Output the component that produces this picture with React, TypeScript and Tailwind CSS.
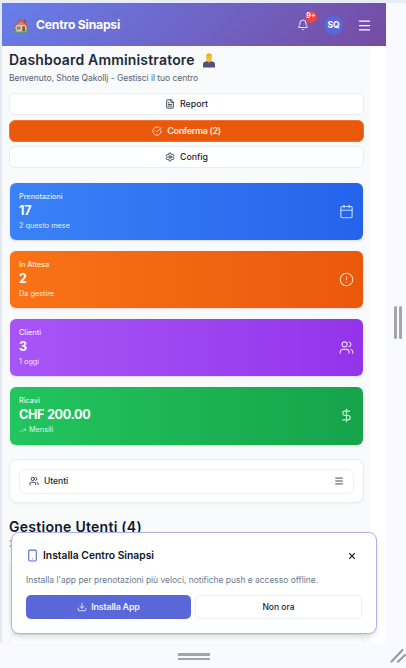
import type { ReactNode } from "react";
import {
  Bell,
  Calendar,
  CircleAlert,
  CircleCheckBig,
  DollarSign,
  Download,
  FileText,
  Menu,
  Settings,
  Smartphone,
  TrendingUp,
  Users,
  X,
} from "lucide-react";

function HouseEmoji() {
  return (
    <svg width="16" height="15" viewBox="0 0 16 15" className="shrink-0">
      <rect x="0.5" y="12.6" width="15" height="1.9" rx="0.9" fill="#63a54a" />
      <rect x="11" y="1.5" width="2" height="5" fill="#9a5142" />
      <path d="M2.5 7.5 8 2.5l5.5 5V13.4h-11z" fill="#e3c9a4" />
      <path d="M0.6 8.2 7.2 1.5q.8-.7 1.6 0l6.6 6.7-1 .9L8 3.4 1.6 9.1z" fill="#cf5540" />
      <path d="M8 3.2 12 7H4z" fill="#c98966" />
      <rect x="3.8" y="8.5" width="3.6" height="3" fill="#668ca6" />
      <rect x="9.3" y="8.3" width="2.7" height="5.1" fill="#925039" />
      <circle cx="2" cy="12.2" r="1.4" fill="#619a49" />
      <circle cx="14" cy="12.4" r="1.2" fill="#619a49" />
    </svg>
  );
}

function OfficeWorkerEmoji() {
  return (
    <svg width="14" height="15" viewBox="0 0 14 15" className="shrink-0">
      <path d="M1 14.6V11.4q0-2.5 3.2-3.1h5.6q3.2.6 3.2 3.1v3.2z" fill="#58506f" />
      <path d="M5.8 8.3h2.4L7 10.6z" fill="#b9b6cc" />
      <path d="m6.4 9.5h1.2l.5 4L7 14.6l-1.1-1.1z" fill="#63479d" />
      <rect x="5.6" y="6.8" width="2.8" height="1.9" fill="#e6a51b" />
      <ellipse cx="7" cy="4.6" rx="2.9" ry="3.8" fill="#f5bd2f" />
      <path d="M4 4Q3.8.6 7 .6T10 4L9.2 2.6Q6.4 2.9 4.8 2.5z" fill="#e5a828" />
    </svg>
  );
}

function ActionButton({ icon, label, primary = false }: { icon: ReactNode; label: string; primary?: boolean }) {
  return (
    <button
      className={
        primary
          ? "flex h-[22px] w-full items-center justify-center gap-[5px] rounded-md border border-[#ee7430] bg-[#ea580c] text-[9px] font-semibold tracking-[-0.36px] text-[#ffe9dc]"
          : "flex h-[22px] w-full items-center justify-center gap-[5px] rounded-md border border-[#e9edf3] bg-white text-[8.8px] font-medium text-[#1e2533]"
      }
    >
      {icon}
      {label}
    </button>
  );
}

function StatCard({
  label,
  value,
  note,
  icon,
  tone,
}: {
  label: string;
  value: string;
  note: ReactNode;
  icon: ReactNode;
  tone: string;
}) {
  return (
    <section className={`flex h-[57.5px] items-center justify-between rounded-md pr-[9.5px] pl-[9.5px] text-white shadow-sm ${tone}`}>
      <div>
        <p className="text-[7.3px] leading-[10px] font-medium opacity-85">{label}</p>
        <p className="text-[12.6px] leading-[17px] font-bold tracking-[-0.3px]">{value}</p>
        <p className="mt-[2px] flex items-center gap-[3px] text-[7.3px] leading-[10px] opacity-85">{note}</p>
      </div>
      {icon}
    </section>
  );
}

export default function App() {
  return (
    <div className="relative h-[668px] w-[406px] overflow-hidden bg-[#f8faff] pt-[3px] pl-[2px] font-['Inter',sans-serif]">
      <div className="absolute inset-x-0 top-0 h-[3px] bg-[#e9eef6]" />
      <div className="absolute top-0 left-0 h-[643px] w-[2px] bg-[#e3e9f2]" />

      <div className="h-[640px] w-[384px] overflow-hidden bg-white">
        <header className="flex h-[43px] items-center bg-[linear-gradient(135deg,#667eea_0%,#764ba2_100%)] pt-px pl-[11px] text-white">
          <HouseEmoji />
          <h1 className="ml-[7px] flex-1 text-[12.2px] font-bold tracking-[-0.22px] whitespace-nowrap">Centro Sinapsi</h1>
          <div className="relative mr-[15px]">
            <Bell size={12} strokeWidth={2} className="text-[#efe9fa]" />
            <span className="absolute -top-[8.5px] left-[8px] flex size-[12px] items-center justify-center rounded-full bg-[#ef4444] text-[7px] font-bold">
              9+
            </span>
          </div>
          <span className="mr-[14px] flex size-[19px] items-center justify-center rounded-full bg-[#5a67d8] text-[8.5px] font-bold">
            SQ
          </span>
          <Menu size={15} strokeWidth={2} className="mr-[14px]" />
        </header>

        <main className="h-[597px] w-[368px] bg-[#f8fafc] pr-[6px] pl-[7px]">
          <div className="flex h-[28px] items-center gap-[7px]">
            <h2 className="text-[14px] leading-[18px] font-semibold tracking-[0.17px] whitespace-nowrap text-[#1f2937]">
              Dashboard Amministratore
            </h2>
            <OfficeWorkerEmoji />
          </div>
          <p className="h-[19px] text-[8.5px] leading-[9px] tracking-[-0.04px] text-[#566172]">
            Benvenuto, Shote Qakollj - Gestisci il tuo centro
          </p>

          <div className="flex flex-col gap-[4.5px]">
            <ActionButton icon={<FileText size={10} />} label="Report" />
            <ActionButton icon={<CircleCheckBig size={10} />} label="Conferma (2)" primary />
            <ActionButton icon={<Settings size={10} />} label="Config" />
          </div>

          <div className="mt-[14.5px] mr-px ml-[0.5px] flex flex-col gap-[10.7px]">
            <StatCard
              label="Prenotazioni"
              value="17"
              note="2 questo mese"
              tone="bg-linear-to-r from-[#3b82f6] to-[#2563eb]"
              icon={<Calendar size={15} strokeWidth={1.8} className="text-[#bfdbfe]" />}
            />
            <StatCard
              label="In Attesa"
              value="2"
              note="Da gestire"
              tone="bg-linear-to-r from-[#f97316] to-[#ea580c]"
              icon={<CircleAlert size={15} strokeWidth={1.8} className="text-[#fed7aa]" />}
            />
            <StatCard
              label="Clienti"
              value="3"
              note="1 oggi"
              tone="bg-linear-to-r from-[#a855f7] to-[#9333ea]"
              icon={<Users size={15} strokeWidth={1.8} className="text-[#e9d5ff]" />}
            />
            <StatCard
              label="Ricavi"
              value="CHF 200.00"
              note={
                <>
                  <TrendingUp size={7} />
                  Mensili
                </>
              }
              tone="bg-linear-to-r from-[#22c55e] to-[#16a34a]"
              icon={<DollarSign size={15} strokeWidth={1.8} className="text-[#bbf7d0]" />}
            />
          </div>

          <div className="mt-[14.9px] h-[44px] rounded-lg border border-[#e8edf3] bg-white px-[9px] pt-[8.5px] shadow-xs">
            <button className="flex h-[25px] w-full items-center rounded-md border border-[#edf1f5] px-[9px] text-[8.5px] font-medium text-[#1e2533]">
              <Users size={10} />
              <span className="ml-[5px] flex-1 text-left">Utenti</span>
              <Menu size={10} />
            </button>
          </div>

          <h2 className="mt-[15px] text-[14px] leading-[18px] font-semibold tracking-[0.27px] text-[#0f172a]">Gestione Utenti (4)</h2>
          <p className="mt-[2px] text-[8.5px] leading-[12px] text-[#64748b]">3 clienti</p>
          <div className="mt-[8px] h-[70px] rounded-lg border border-[#e8edf3] bg-[#fbfcfe]" />
          <div className="mt-[6px] h-[40px] rounded-t-lg border border-[#edf1f6] bg-[#fbfcfe]" />
        </main>
      </div>

      <aside className="absolute top-[532px] left-[11px] h-[102px] w-[366px] rounded-lg border border-[#aeb3e2] bg-white px-[14px] pt-[14px] shadow-md">
        <div className="flex h-[18px] items-center">
          <Smartphone size={13} className="-mt-px text-[#5a67d8]" />
          <h3 className="ml-[4px] flex-1 text-[10.3px] font-semibold text-[#111827]">Installa Centro Sinapsi</h3>
          <X size={10} strokeWidth={2.6} className="mr-[5px] text-[#1f2937]" />
        </div>
        <p className="mt-[9px] text-[8.5px] leading-[12px] tracking-[-0.03px] whitespace-nowrap text-[#6b7a90]">
          Installa l'app per prenotazioni più veloci, notifiche push e accesso offline.
        </p>
        <div className="mt-[9px] flex gap-[4px]">
          <button className="flex h-[24px] flex-1 items-center justify-center gap-[4px] rounded-[5px] bg-[#5a67d8] text-[9px] font-semibold tracking-[-0.24px] text-[#eef0ff]">
            <Download size={10} />
            Installa App
          </button>
          <button className="h-[24px] flex-1 rounded-[5px] border border-[#edf0f4] bg-white text-[8.5px] font-medium text-[#1e2533]">
            Non ora
          </button>
        </div>
      </aside>

      <div className="absolute top-[306px] left-[394px] flex gap-[2px]">
        <i className="h-[33px] w-[3px] rounded-full bg-[#a3a5a8]" />
        <i className="h-[33px] w-[3px] rounded-full bg-[#a3a5a8]" />
      </div>
      <div className="absolute top-[653px] left-[178px] flex flex-col gap-[2px]">
        <i className="h-[2.5px] w-[32px] bg-[#a3a5a8]" />
        <i className="h-[2.5px] w-[32px] bg-[#a3a5a8]" />
      </div>
      <svg className="absolute top-[646px] left-[388px]" width="18" height="20" viewBox="0 0 18 20" stroke="#97999c" strokeWidth="2.1" strokeLinecap="round">
        <path d="M3.5 15.5 14.5 4M10 15.8 17 9" />
      </svg>
    </div>
  );
}
